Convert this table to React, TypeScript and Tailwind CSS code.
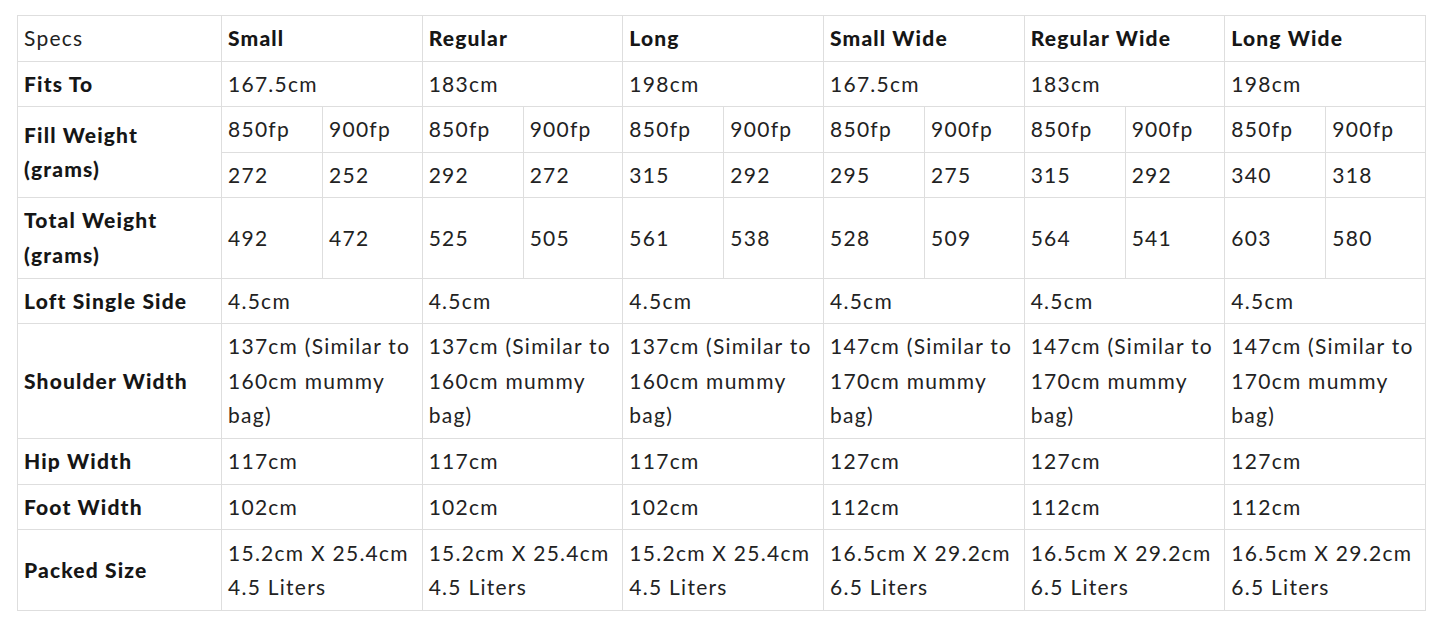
const sizes = ['Small', 'Regular', 'Long', 'Small Wide', 'Regular Wide', 'Long Wide'];
const fitsTo = ['167.5cm', '183cm', '198cm', '167.5cm', '183cm', '198cm'];
const fill = [
  ['272', '252'],
  ['292', '272'],
  ['315', '292'],
  ['295', '275'],
  ['315', '292'],
  ['340', '318'],
];
const total = [
  ['492', '472'],
  ['525', '505'],
  ['561', '538'],
  ['528', '509'],
  ['564', '541'],
  ['603', '580'],
];
const loft = Array(6).fill('4.5cm');
const shoulder = [
  '137cm (Similar to 160cm mummy bag)',
  '137cm (Similar to 160cm mummy bag)',
  '137cm (Similar to 160cm mummy bag)',
  '147cm (Similar to 170cm mummy bag)',
  '147cm (Similar to 170cm mummy bag)',
  '147cm (Similar to 170cm mummy bag)',
];
const hip = ['117cm', '117cm', '117cm', '127cm', '127cm', '127cm'];
const foot = ['102cm', '102cm', '102cm', '112cm', '112cm', '112cm'];
const packed = [
  ['15.2cm X 25.4cm', '4.5 Liters'],
  ['15.2cm X 25.4cm', '4.5 Liters'],
  ['15.2cm X 25.4cm', '4.5 Liters'],
  ['16.5cm X 29.2cm', '6.5 Liters'],
  ['16.5cm X 29.2cm', '6.5 Liters'],
  ['16.5cm X 29.2cm', '6.5 Liters'],
];

const td = 'border border-[#dedede] px-[6px] py-[5px] align-middle tracking-[0.06em]';
const th = 'border border-[#dedede] px-[6px] py-[5px] align-middle font-black tracking-[0.055em] text-[#161616]';

function SpanRow({ label, values }: { label: string; values: string[] }) {
  return (
    <tr>
      <td className={th}>{label}</td>
      {values.map((v, i) => (
        <td key={i} colSpan={2} className={td}>
          {v}
        </td>
      ))}
    </tr>
  );
}

export default function App() {
  return (
    <div className="min-h-[630px] bg-white pl-[17px] pt-[15px]">
      <table
        className="table-fixed border-collapse text-[21px] leading-[34.6px] text-[#222]"
        style={{ width: 1408, fontFamily: 'Lato, "Noto Sans", sans-serif' }}
      >
        <colgroup>
          <col className="w-[204px]" />
          {Array.from({ length: 12 }).map((_, i) => (
            <col key={i} className={i % 2 === 0 ? 'w-[101px]' : 'w-[99.67px]'} />
          ))}
        </colgroup>
        <tbody>
          <tr>
            <td className={td}>Specs</td>
            {sizes.map((s) => (
              <td key={s} colSpan={2} className={th}>
                {s}
              </td>
            ))}
          </tr>
          <SpanRow label="Fits To" values={fitsTo} />
          <tr>
            <td rowSpan={2} className={th}>
              Fill Weight
              <br />
              (grams)
            </td>
            {fill.flatMap((_, i) => [
              <td key={'a' + i} className={td}>850fp</td>,
              <td key={'b' + i} className={td}>900fp</td>,
            ])}
          </tr>
          <tr>
            {fill.flatMap((pair, i) => [
              <td key={'c' + i} className={td}>{pair[0]}</td>,
              <td key={'d' + i} className={td}>{pair[1]}</td>,
            ])}
          </tr>
          <tr>
            <td className={th}>
              Total Weight
              <br />
              (grams)
            </td>
            {total.flatMap((pair, i) => [
              <td key={'e' + i} className={td}>{pair[0]}</td>,
              <td key={'f' + i} className={td}>{pair[1]}</td>,
            ])}
          </tr>
          <SpanRow label="Loft Single Side" values={loft} />
          <SpanRow label="Shoulder Width" values={shoulder} />
          <SpanRow label="Hip Width" values={hip} />
          <SpanRow label="Foot Width" values={foot} />
          <tr className="h-[81px]">
            <td className={th}>Packed Size</td>
            {packed.map((p, i) => (
              <td key={i} colSpan={2} className={td}>
                {p[0]}
                <br />
                {p[1]}
              </td>
            ))}
          </tr>
        </tbody>
      </table>
    </div>
  );
}
